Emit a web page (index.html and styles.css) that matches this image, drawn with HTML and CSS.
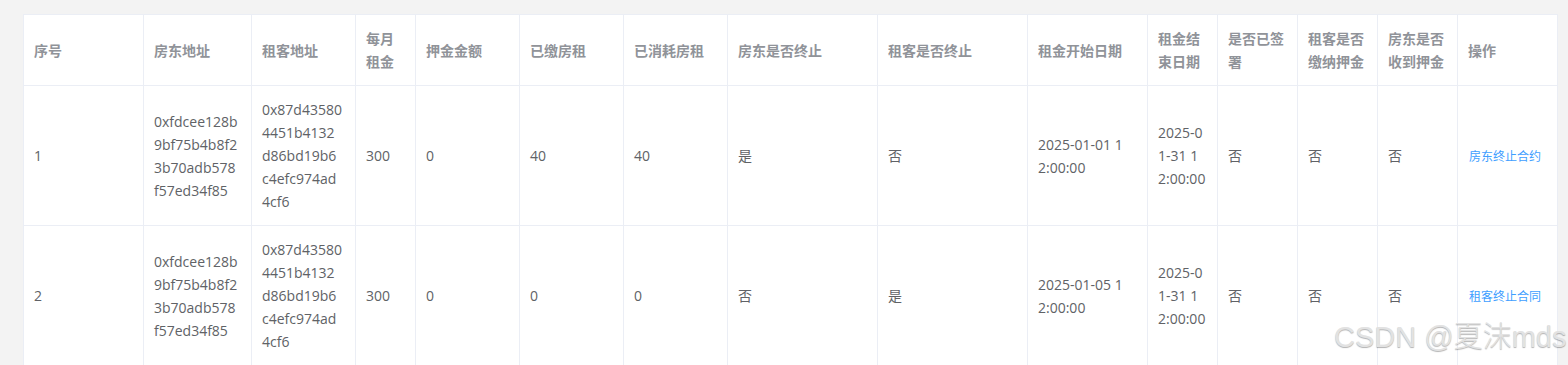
FILE: index.html
```html
<!DOCTYPE html>
<html lang="zh-CN">
<head>
<meta charset="utf-8">
<title>合约列表</title>
<link rel="stylesheet" href="styles.css">
</head>
<body>
<div class="page">
  <table class="contracts">
    <colgroup>
      <col class="w120"><col class="w108"><col class="w104"><col class="w60"><col class="w104"><col class="w104"><col class="w104"><col class="w150"><col class="w150"><col class="w120"><col class="w70"><col class="w80"><col class="w80"><col class="w80"><col class="w100">
    </colgroup>
    <thead>
      <tr>
        <th><div class="cell">序号</div></th>
        <th><div class="cell">房东地址</div></th>
        <th><div class="cell">租客地址</div></th>
        <th><div class="cell">每月租金</div></th>
        <th><div class="cell">押金金额</div></th>
        <th><div class="cell">已缴房租</div></th>
        <th><div class="cell">已消耗房租</div></th>
        <th><div class="cell">房东是否终止</div></th>
        <th><div class="cell">租客是否终止</div></th>
        <th><div class="cell">租金开始日期</div></th>
        <th><div class="cell">租金结束日期</div></th>
        <th><div class="cell">是否已签署</div></th>
        <th><div class="cell">租客是否缴纳押金</div></th>
        <th><div class="cell">房东是否收到押金</div></th>
        <th><div class="cell">操作</div></th>
      </tr>
    </thead>
    <tbody>
      <tr>
        <td><div class="cell">1</div></td>
        <td><div class="cell">0xfdcee128b<br>9bf75b4b8f2<br>3b70adb578<br>f57ed34f85</div></td>
        <td><div class="cell">0x87d43580<br>4451b4132<br>d86bd19b6<br>c4efc974ad<br>4cf6</div></td>
        <td><div class="cell">300</div></td>
        <td><div class="cell">0</div></td>
        <td><div class="cell">40</div></td>
        <td><div class="cell">40</div></td>
        <td><div class="cell">是</div></td>
        <td><div class="cell">否</div></td>
        <td><div class="cell">2025-01-01 1<br>2:00:00</div></td>
        <td><div class="cell">2025-0<br>1-31 1<br>2:00:00</div></td>
        <td><div class="cell">否</div></td>
        <td><div class="cell">否</div></td>
        <td><div class="cell">否</div></td>
        <td><div class="cell"><button class="text-btn" type="button">房东终止合约</button></div></td>
      </tr>
      <tr>
        <td><div class="cell">2</div></td>
        <td><div class="cell">0xfdcee128b<br>9bf75b4b8f2<br>3b70adb578<br>f57ed34f85</div></td>
        <td><div class="cell">0x87d43580<br>4451b4132<br>d86bd19b6<br>c4efc974ad<br>4cf6</div></td>
        <td><div class="cell">300</div></td>
        <td><div class="cell">0</div></td>
        <td><div class="cell">0</div></td>
        <td><div class="cell">0</div></td>
        <td><div class="cell">否</div></td>
        <td><div class="cell">是</div></td>
        <td><div class="cell">2025-01-05 1<br>2:00:00</div></td>
        <td><div class="cell">2025-0<br>1-31 1<br>2:00:00</div></td>
        <td><div class="cell">否</div></td>
        <td><div class="cell">否</div></td>
        <td><div class="cell">否</div></td>
        <td><div class="cell"><button class="text-btn" type="button">租客终止合同</button></div></td>
      </tr>
    </tbody>
  </table>
  <div class="watermark">CSDN @夏沫mds</div>
</div>
</body>
</html>
```

FILE: styles.css
```css
html, body {
  margin: 0;
  padding: 0;
  background: #f3f3f3;
  overflow: hidden;
}

.page {
  position: relative;
  height: 365px;
  padding: 14px 0 0 23px;
  box-sizing: border-box;
  font-family: "Open Sans", "Noto Sans CJK SC", sans-serif;
  font-size: 14px;
}

.contracts {
  width: 1535px;
  table-layout: fixed;
  border-collapse: separate;
  border-spacing: 0;
  background: #fff;
  border-left: 1px solid #ebeef5;
  border-top: 1px solid #ebeef5;
}

.w60 { width: 60px; }
.w70 { width: 70px; }
.w80 { width: 80px; }
.w100 { width: 100px; }
.w104 { width: 104px; }
.w108 { width: 108px; }
.w120 { width: 120px; }
.w150 { width: 150px; }

.contracts th,
.contracts td {
  padding: 12px 0;
  border-right: 1px solid #ebeef5;
  border-bottom: 1px solid #ebeef5;
  text-align: left;
  vertical-align: middle;
  box-sizing: border-box;
}

.contracts th {
  color: #909399;
  font-weight: 700;
}

.contracts td {
  color: #606266;
  font-weight: 400;
}

.cell {
  padding: 0 10px;
  line-height: 23px;
  word-break: break-all;
  font-family: "Open Sans", "Noto Sans CJK SC", sans-serif;
}

.text-btn {
  border: 0;
  background: none;
  padding: 0 0 0 1px;
  margin: 0;
  color: #409eff;
  font-family: "Open Sans", "Noto Sans CJK SC", sans-serif;
  font-size: 12px;
  line-height: 23px;
  cursor: pointer;
}

.watermark {
  position: absolute;
  left: 1334px;
  top: 317px;
  font-family: "Liberation Sans", "Noto Sans CJK SC", sans-serif;
  font-size: 29px;
  font-weight: 300;
  line-height: 40px;
  color: #e2e2e2;
  text-shadow: 0 1px 1px rgba(0, 0, 0, 0.3);
  white-space: nowrap;
  pointer-events: none;
}
```
